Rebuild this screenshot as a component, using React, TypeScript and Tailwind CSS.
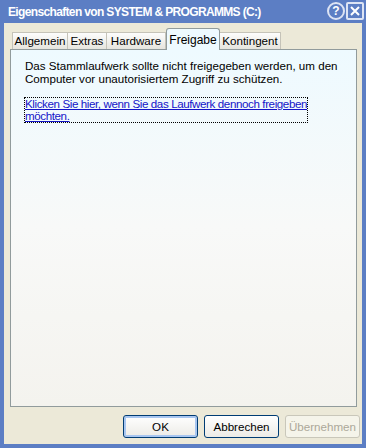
import React from 'react';

const tabs = [
    { label: 'Allgemein', w: 'w-[56px]' },
    { label: 'Extras', w: 'w-[39px]' },
    { label: 'Hardware', w: 'w-[59px]' },
    { label: 'Freigabe', w: 'w-[54px]' },
    { label: 'Kontingent', w: 'w-[61px]' },
];

const App: React.FC = () => {
    return (
        <div className="w-[366px] h-[448px] flex flex-col bg-[#5c7ec4] font-['Liberation_Sans',Arial,sans-serif] text-[11.6px] text-black">
            {/* title bar */}
            <div className="h-[23px] flex items-center pl-[8px] pr-[2px] shrink-0">
                <span className="flex-1 text-white font-bold text-[12px] tracking-[-0.65px]">
                    Eigenschaften von SYSTEM &amp; PROGRAMMS (C:)
                </span>
                <div className="flex items-center gap-[1px] mt-[-2px]">
                    <div className="w-[18px] h-[18px] rounded-full border-2 border-[#dde4f4] flex items-center justify-center text-white font-bold text-[12px] leading-none">
                        ?
                    </div>
                    <div className="w-[18px] h-[18px] border-2 border-[#dde4f4] rounded-[2px] flex items-center justify-center">
                        <svg width="10" height="10" viewBox="0 0 10 10">
                            <path d="M1 1 L9 9 M9 1 L1 9" stroke="#ffffff" strokeWidth="2" />
                        </svg>
                    </div>
                </div>
            </div>

            {/* body */}
            <div className="flex-1 mx-[4px] mb-[4px] bg-[#ece9d8] flex flex-col pl-[6px] pr-[5px] pt-[5px]">
                <div className="flex items-end h-[21px] pl-[2px]">
                    {tabs.map((t) => {
                        const active = t.label === 'Freigabe';
                        return active ? (
                            <div
                                key={t.label}
                                className={`${t.w} h-[22px] mb-[-1px] relative z-10 bg-[#eefaff] border border-b-0 border-[#919b9c] rounded-t-[3px] flex items-center justify-center text-[12px]`}
                            >
                                {t.label}
                            </div>
                        ) : (
                            <div
                                key={t.label}
                                className={`${t.w} h-[17px] bg-linear-to-b from-[#fdfdfc] to-[#e6e5de] border border-b-0 border-l-0 first:border-l border-[#c5c3b8] flex items-center justify-center`}
                            >
                                {t.label}
                            </div>
                        );
                    })}
                </div>

                {/* panel */}
                <div className="h-[358px] border border-[#919b9c] bg-linear-to-b from-[#eefaff] via-[#f8f9f8] to-[#f4f3ee] pl-[14px] pt-[9px] shrink-0">
                    <p className="leading-[13px]">
                        Das Stammlaufwerk sollte nicht freigegeben werden, um den
                        <br />
                        Computer vor unautorisiertem Zugriff zu schützen.
                    </p>
                    <a className="mt-[12px] ml-[-1px] inline-block border border-dotted border-black text-[#1414c8] underline leading-[12px] tracking-[-0.4px]">
                        Klicken Sie hier, wenn Sie das Laufwerk dennoch freigeben
                        <br />
                        möchten.
                    </a>
                </div>

                {/* buttons */}
                <div className="flex justify-end gap-[6px] mt-[8px] mr-[-3px]">
                    <button className="w-[75px] h-[23px] rounded-[3px] border border-[#003c74] bg-linear-to-b from-[#ffffff] to-[#ecebe6] shadow-[inset_0_0_0_2px_#a8c6f0] text-[11.6px]">
                        OK
                    </button>
                    <button className="w-[75px] h-[23px] rounded-[3px] border border-[#003c74] bg-linear-to-b from-[#ffffff] to-[#ecebe6] text-[11.6px]">
                        Abbrechen
                    </button>
                    <button className="w-[75px] h-[23px] rounded-[3px] border border-[#c9c7ba] bg-[#f5f4ea] text-[#aca899] text-[11.6px]">
                        Übernehmen
                    </button>
                </div>
            </div>
        </div>
    );
};

export default App;
